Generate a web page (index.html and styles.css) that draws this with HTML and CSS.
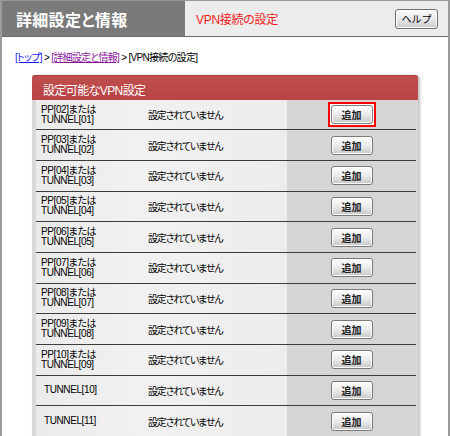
FILE: index.html
```html
<!DOCTYPE html>
<html lang="ja">
<head>
    <meta charset="UTF-8">
    <title>VPN接続の設定</title>
    <link rel="stylesheet" href="styles.css">
</head>
<body>
    <div class="page">
        <div class="header">
            <div class="header-title">詳細設定と情報</div>
            <div class="header-sub">VPN接続の設定</div>
            <button class="help-btn">ヘルプ</button>
        </div>

        <div class="crumbs">
            <a href="#" class="link-top">[トップ]</a> &gt;
            <a href="#" class="link-visited">[詳細設定と情報]</a> &gt;
            [VPN接続の設定]
        </div>

        <!-- 設定可能なVPN設定 -->
        <div class="panel">
            <div class="panel-head">設定可能なVPN設定</div>
            <div class="rows">
                <div class="row">
                    <div class="cell name">PP[02]または<br>TUNNEL[01]</div>
                    <div class="cell state">設定されていません</div>
                    <div class="cell action"><span class="focus-box"><button class="add-btn">追加</button></span></div>
                </div>
                <div class="row">
                    <div class="cell name">PP[03]または<br>TUNNEL[02]</div>
                    <div class="cell state">設定されていません</div>
                    <div class="cell action"><button class="add-btn">追加</button></div>
                </div>
                <div class="row">
                    <div class="cell name">PP[04]または<br>TUNNEL[03]</div>
                    <div class="cell state">設定されていません</div>
                    <div class="cell action"><button class="add-btn">追加</button></div>
                </div>
                <div class="row">
                    <div class="cell name">PP[05]または<br>TUNNEL[04]</div>
                    <div class="cell state">設定されていません</div>
                    <div class="cell action"><button class="add-btn">追加</button></div>
                </div>
                <div class="row">
                    <div class="cell name">PP[06]または<br>TUNNEL[05]</div>
                    <div class="cell state">設定されていません</div>
                    <div class="cell action"><button class="add-btn">追加</button></div>
                </div>
                <div class="row">
                    <div class="cell name">PP[07]または<br>TUNNEL[06]</div>
                    <div class="cell state">設定されていません</div>
                    <div class="cell action"><button class="add-btn">追加</button></div>
                </div>
                <div class="row">
                    <div class="cell name">PP[08]または<br>TUNNEL[07]</div>
                    <div class="cell state">設定されていません</div>
                    <div class="cell action"><button class="add-btn">追加</button></div>
                </div>
                <div class="row">
                    <div class="cell name">PP[09]または<br>TUNNEL[08]</div>
                    <div class="cell state">設定されていません</div>
                    <div class="cell action"><button class="add-btn">追加</button></div>
                </div>
                <div class="row">
                    <div class="cell name">PP[10]または<br>TUNNEL[09]</div>
                    <div class="cell state">設定されていません</div>
                    <div class="cell action"><button class="add-btn">追加</button></div>
                </div>
                <div class="row">
                    <div class="cell name single">TUNNEL[10]</div>
                    <div class="cell state">設定されていません</div>
                    <div class="cell action"><button class="add-btn">追加</button></div>
                </div>
                <div class="row">
                    <div class="cell name single">TUNNEL[11]</div>
                    <div class="cell state">設定されていません</div>
                    <div class="cell action"><button class="add-btn">追加</button></div>
                </div>
            </div>
        </div>
    </div>
</body>
</html>
```

FILE: styles.css
```css
body {
    margin: 0;
    background-color: #fff;
    color: #000;
    font-family: "Liberation Sans", "Noto Sans CJK JP", sans-serif;
    font-feature-settings: "palt";
    overflow: hidden;
}

.page {
    width: 450px;
    height: 436px;
    box-sizing: border-box;
    border-left: 2px solid #9a9a9a;
    border-right: 2px solid #9a9a9a;
    border-top: 1px solid #9a9a9a;
    overflow: hidden;
}

/* ヘッダー */
.header {
    display: flex;
    align-items: center;
    height: 35px;
    background-color: #ececec;
    border-bottom: 1px solid #6a6a6a;
}

.header-title {
    width: 183px;
    height: 100%;
    box-sizing: border-box;
    padding-left: 14px;
    display: flex;
    align-items: center;
    background-color: #7a7a7a;
    color: #fff;
    font-size: 16px;
    font-weight: bold;
    letter-spacing: 0.3px;
}

.header-sub {
    flex: 1;
    padding-left: 11px;
    color: #f21c1c;
    font-size: 12px;
    letter-spacing: -0.3px;
}

.help-btn {
    width: 43px;
    height: 20px;
    margin-right: 10px;
    padding: 0;
    border: 1px solid #6e6e6e;
    border-radius: 3px;
    background: linear-gradient(#fdfdfd, #e4e4e4 60%, #c8c8c8);
    box-shadow: inset 0 0 0 1px #fff;
    font-family: inherit;
    font-size: 10px;
    color: #000;
}

/* パンくず */
.crumbs {
    padding: 12px 0 0 13px;
    height: 26px;
    font-size: 10px;
    letter-spacing: -0.7px;
}

.crumbs a {
    text-decoration: underline;
}

.link-top {
    color: #1a1aff;
}

.link-visited {
    color: #8a1a9a;
}

/* パネル */
.panel {
    width: 386px;
    margin: 0 0 0 30px;
    padding-bottom: 20px;
    background-color: #d8d8d8;
    border-radius: 3px 3px 0 0;
    box-shadow: 2px 1px 3px rgba(0, 0, 0, 0.25);
}

.panel-head {
    height: 25px;
    box-sizing: border-box;
    padding: 5px 0 0 11px;
    background: linear-gradient(#c04e4e, #b84444);
    border-top: 1px solid #a83a3a;
    border-radius: 3px 3px 0 0;
    color: #fff;
    font-size: 12px;
    letter-spacing: -0.6px;
}

.rows {
    padding: 0 2px 0 4px;
}

.row {
    display: grid;
    grid-template-columns: 105px 146px 1fr;
    height: 29.67px;
    border-bottom: 1px solid #3c3c3c;
    font-size: 10px;
}

.row:first-child {
    height: 29.3px;
}

.cell {
    display: flex;
    align-items: center;
}

.name {
    padding-left: 5px;
    line-height: 10px;
    letter-spacing: -0.4px;
    background: linear-gradient(90deg, #ebebeb, #f1f1f1);
}

.name.single {
    padding-left: 8px;
}

.state {
    padding-left: 7px;
    letter-spacing: -1.2px;
    background: linear-gradient(90deg, #f1f1f1, #ededed);
}

.action {
    justify-content: center;
    background-color: #d5d5d5;
}

.add-btn {
    width: 42px;
    height: 19px;
    padding: 0;
    border: 1px solid #7a7a7a;
    border-radius: 3px;
    background: linear-gradient(#fefefe, #e8e8e8 55%, #c6c6c6);
    box-shadow: inset 0 0 0 1px #fff;
    font-family: inherit;
    font-size: 10px;
    font-weight: bold;
    color: #222;
}

/* 選択中のボタンを囲む赤枠 */
.focus-box {
    display: flex;
    padding: 1px;
    border: 2px solid #f00;
    background-color: #fff;
}
```
